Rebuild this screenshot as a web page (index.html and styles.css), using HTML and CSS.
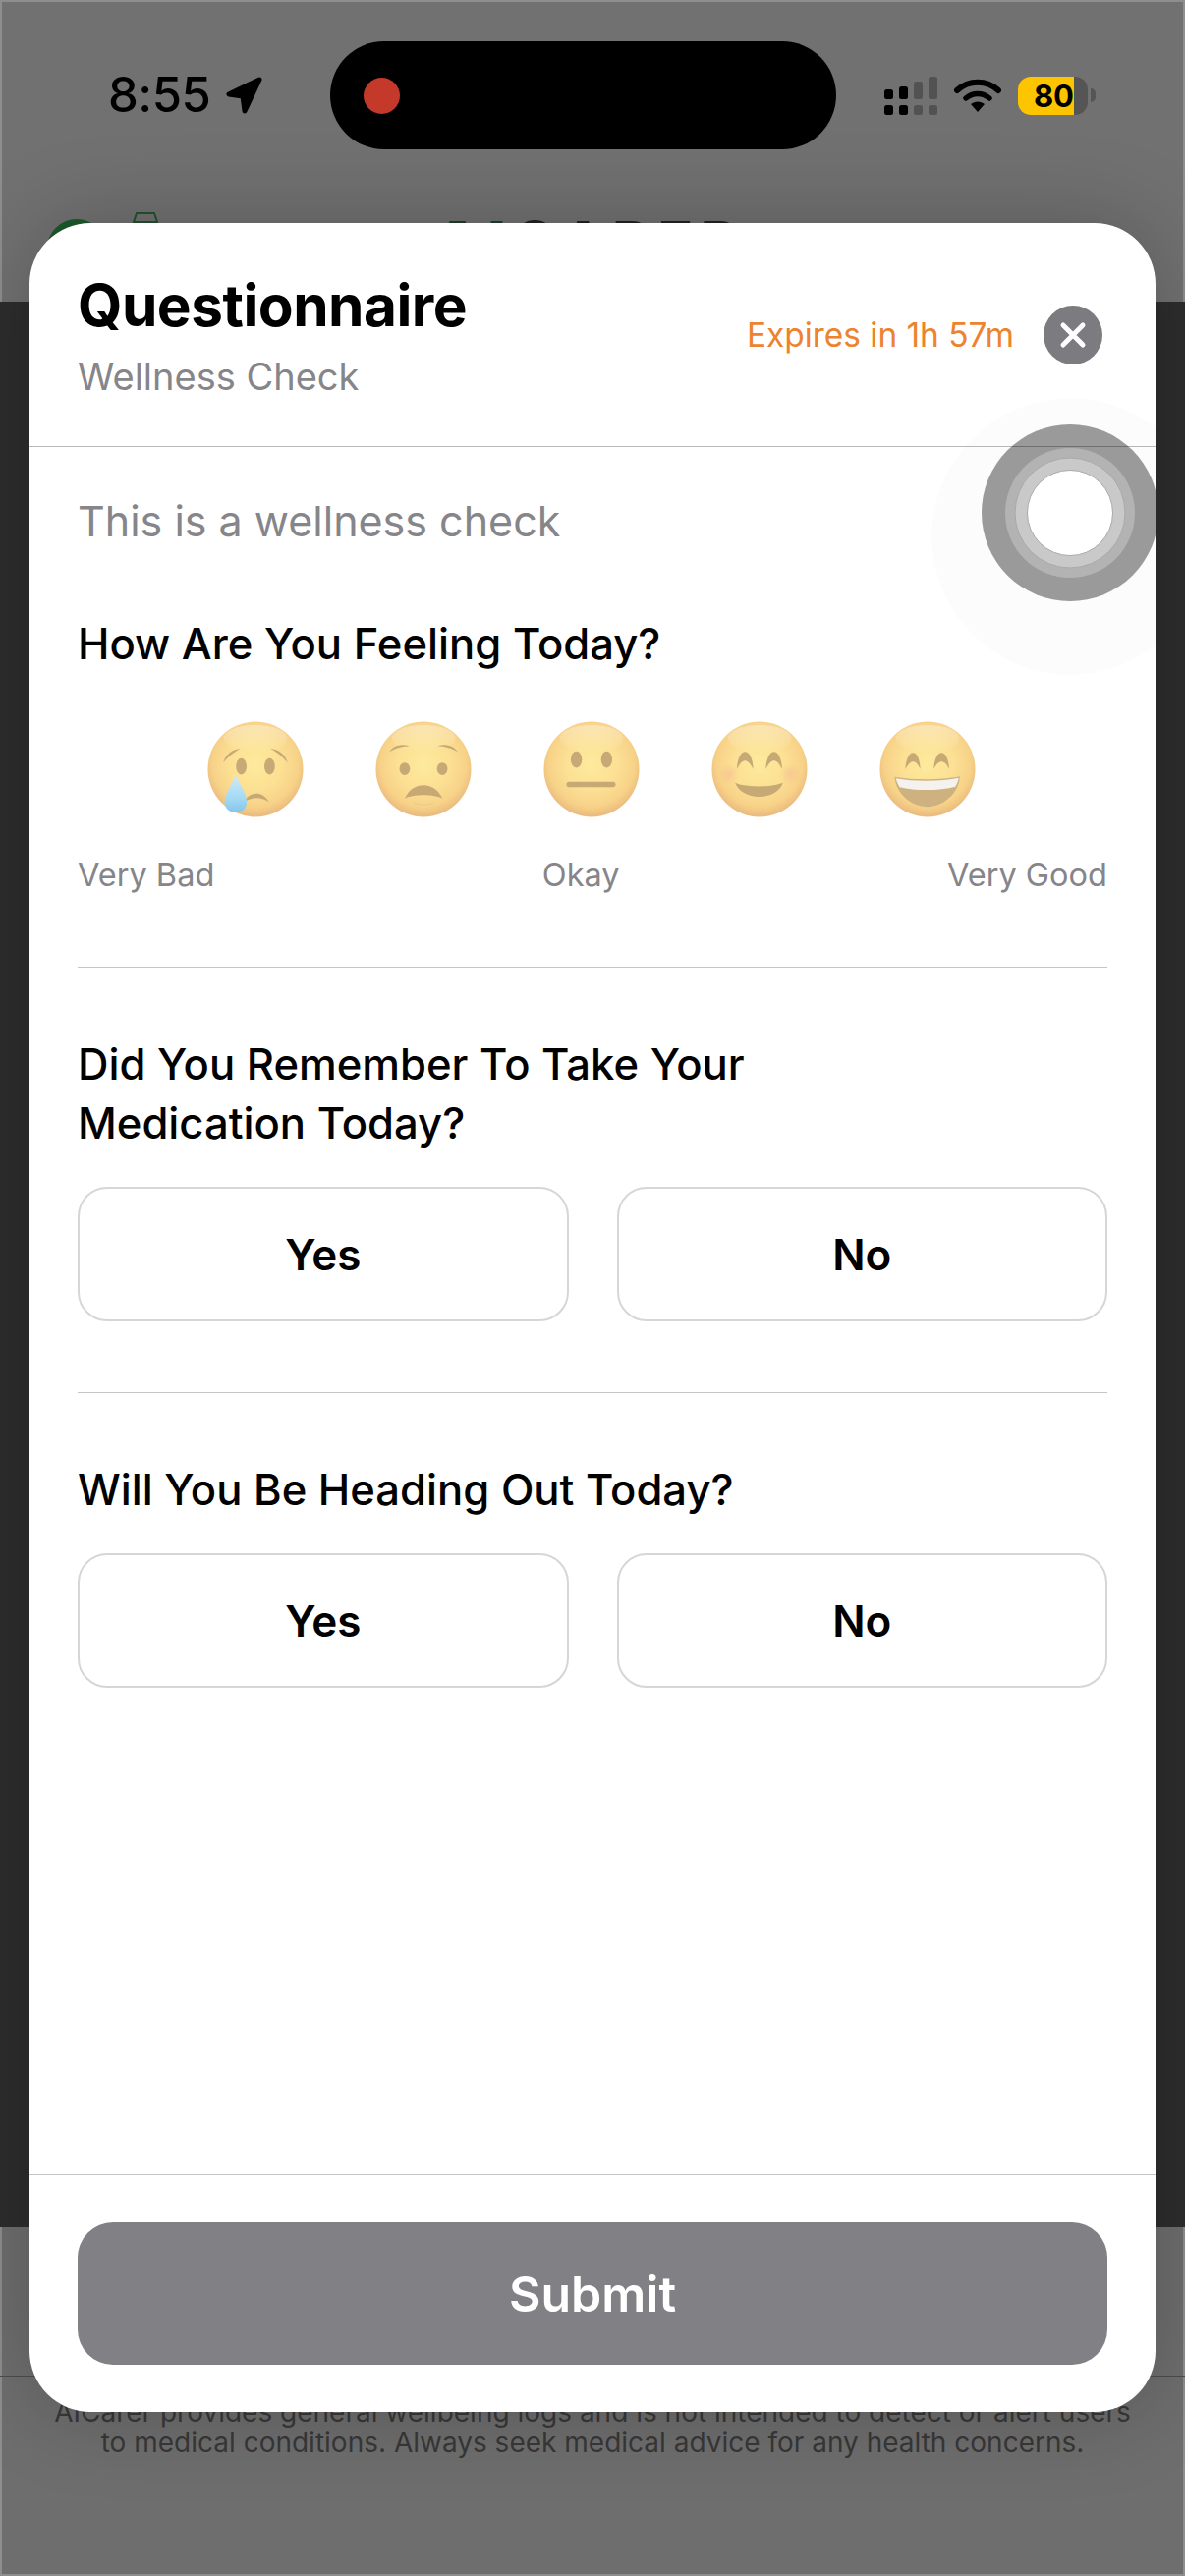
FILE: index.html
```html
<!DOCTYPE html>
<html lang="en">
<head>
    <meta charset="UTF-8">
    <meta name="viewport" content="width=device-width, initial-scale=1.0">
    <title>Questionnaire</title>
    <link rel="stylesheet" href="styles.css">
</head>
<body>
    <div class="page">
        <!--app behind the sheet, dimmed-->
        <div class="top-band">
            <div class="status-bar">
                <div class="status-left">
                    <span class="time">8:55</span>
                    <svg class="loc-arrow" viewBox="0 0 38 38"><path d="M35 3 4 18l14 2 2 15z" fill="#000" stroke="#000" stroke-width="5" stroke-linejoin="round"/></svg>
                </div>
                <div class="island"><span class="rec-dot"></span></div>
                <div class="status-right">
                    <svg class="signal" viewBox="0 0 54 39">
                        <rect x="0" y="13" width="9" height="10" rx="2.5" fill="#000"/>
                        <rect x="15" y="10" width="9" height="13" rx="2.5" fill="#000"/>
                        <rect x="30" y="5" width="9" height="18" rx="2.5" fill="#535252"/>
                        <rect x="45" y="0" width="9" height="23" rx="2.5" fill="#535252"/>
                        <rect x="0" y="29" width="9" height="10" rx="2.5" fill="#000"/>
                        <rect x="15" y="29" width="9" height="10" rx="2.5" fill="#000"/>
                        <rect x="30" y="29" width="9" height="10" rx="2.5" fill="#535252"/>
                        <rect x="45" y="29" width="9" height="10" rx="2.5" fill="#535252"/>
                    </svg>
                    <svg class="wifi" viewBox="0 0 48 36">
                        <path d="M3 13C15 2 33 2 45 13" fill="none" stroke="#000" stroke-width="6" stroke-linecap="round"/>
                        <path d="M12 21C19 15 29 15 36 21" fill="none" stroke="#000" stroke-width="5.5" stroke-linecap="round"/>
                        <path d="M17 27C21 23.5 27 23.5 31 27L24 35z" fill="#000"/>
                    </svg>
                    <div class="battery">
                        <div class="battery-body">
                            <span class="battery-level"></span>
                            <span class="battery-num">80</span>
                        </div>
                        <span class="battery-tip"></span>
                    </div>
                </div>
            </div>
            <div class="app-header">
                <span class="app-logo"></span>
                <svg class="app-bottle" viewBox="0 0 26 30"><path d="M4 1h18l3 9v18H1V10zM1 10h24" fill="none" stroke="#24522f" stroke-width="2"/></svg>
                <span class="app-title"><b>AI</b>CARER</span>
            </div>
        </div>
        <div class="dark-band"></div>
        <div class="bottom-band">
            <p class="disclaimer">AICarer provides general wellbeing logs and is not intended to detect or alert users<br>to medical conditions. Always seek medical advice for any health concerns.</p>
        </div>

        <!--questionnaire sheet-->
        <div class="sheet">
            <div class="sheet-head">
                <div>
                    <h1 class="sheet-title">Questionnaire</h1>
                    <div class="sheet-sub">Wellness Check</div>
                </div>
                <div class="head-right">
                    <span class="expires">Expires in 1h 57m</span>
                    <span class="close-btn">
                        <svg viewBox="0 0 60 60"><path d="M20 20 40 40M40 20 20 40" stroke="#fff" stroke-width="5" stroke-linecap="round"/></svg>
                    </span>
                </div>
            </div>

            <div class="sheet-body">
                <p class="intro">This is a wellness check</p>

                <div class="question q-first">How Are You Feeling Today?</div>
                <div class="emoji-row">
                    <svg class="emoji" viewBox="0 0 100 100">
                        <use href="#face"/>
                        <path d="M16.5 43C19 35 26 29 34.5 28.5 28 32 23 36 16.5 43zM83.5 43C81 35 74 29 65.5 28.5 72 32 77 36 83.5 43z" fill="#c6a974"/>
                        <ellipse cx="35.3" cy="47" rx="5.5" ry="8.5" fill="#c6a974"/>
                        <ellipse cx="64.7" cy="47" rx="5.5" ry="8.5" fill="#c6a974"/>
                        <path d="M38 84C42 75 56 70 64 84 55 78 47 79 38 84z" fill="#c6a974"/>
                        <path d="M29.5 56C33 65 41 75 41 84 41 91 35.5 95 29.5 95 23.5 95 18 91 18 84 18 75 26 65 29.5 56z" fill="url(#tear)"/>
                    </svg>
                    <svg class="emoji" viewBox="0 0 100 100">
                        <use href="#face"/>
                        <path d="M14.5 32C18 26 27 23 35.5 26 27 26 21 28 14.5 32zM85.5 32C82 26 73 23 64.5 26 73 26 79 28 85.5 32z" fill="#c6a974"/>
                        <ellipse cx="30.5" cy="49.5" rx="5.5" ry="6.5" fill="#c6a974"/>
                        <ellipse cx="69.5" cy="49.5" rx="5.5" ry="6.5" fill="#c6a974"/>
                        <path d="M30.5 80.5C35 70 43 66.5 50 66.5 57 66.5 65 70 69.8 80.5 62 75.5 38 75.5 30.5 80.5z" fill="#c6a974"/>
                        <path d="M40 85C46 87.5 54 87.5 60 85" fill="none" stroke="#eccd8a" stroke-width="1.5"/>
                    </svg>
                    <svg class="emoji" viewBox="0 0 100 100">
                        <use href="#face"/>
                        <ellipse cx="34.3" cy="40" rx="5.8" ry="8.5" fill="#c6a974"/>
                        <ellipse cx="65.7" cy="40" rx="5.8" ry="8.5" fill="#c6a974"/>
                        <rect x="24" y="63" width="51" height="5.5" rx="2.7" fill="#c6a974"/>
                    </svg>
                    <svg class="emoji" viewBox="0 0 100 100">
                        <use href="#face"/>
                        <circle cx="18" cy="55" r="11" fill="url(#blush)"/>
                        <circle cx="82" cy="55" r="11" fill="url(#blush)"/>
                        <path d="M26.5 50C27 38 31 32 35 32 39 32 43 38 43.5 50 40 43 37.5 41 35 41 32.5 41 30 43 26.5 50zM56.5 50C57 38 61 32 65 32 69 32 73 38 73.5 50 70 43 67.5 41 65 41 62.5 41 60 43 56.5 50z" fill="#c6a974"/>
                        <path d="M24.7 64C35 69 63 69 74.3 64 71 74 60 78.5 50 78.5 38 78.5 28 73 24.7 64z" fill="#c6a974"/>
                    </svg>
                    <svg class="emoji" viewBox="0 0 100 100">
                        <use href="#face"/>
                        <path d="M27 50C27.5 39 31 33 35 33 39 33 42 39 42.5 50 40 44 37.5 42 35 42 32.5 42 30 44 27 50zM56.5 50C57 39 60.5 33 64.5 33 68.5 33 72 39 72.5 50 70 44 67 42 64.5 42 62 42 59 44 56.5 50z" fill="#c6a974"/>
                        <path d="M15.8 58C35 61.5 65 61.5 83.5 57.5 83 75 66 89 50 89 33 89 17 75 15.8 58z" fill="#cdb17f"/>
                        <path d="M17 59.5C36 63 64 63 82.5 59 81.5 63 80.5 65.5 79 68 62 72.5 38 72.5 21 68.5 19 65.5 18 63 17 59.5z" fill="#f3f2ee"/>
                    </svg>
                </div>
                <div class="scale-labels">
                    <span>Very Bad</span>
                    <span>Okay</span>
                    <span>Very Good</span>
                </div>

                <div class="rule"></div>
                <div class="question">Did You Remember To Take Your<br>Medication Today?</div>
                <div class="answers">
                    <div class="answer">Yes</div>
                    <div class="answer">No</div>
                </div>

                <div class="rule rule-last"></div>
                <div class="question">Will You Be Heading Out Today?</div>
                <div class="answers">
                    <div class="answer">Yes</div>
                    <div class="answer">No</div>
                </div>
            </div>

            <div class="sheet-foot">
                <div class="submit">Submit</div>
            </div>

            <!--assistive touch sits on top of the sheet-->
            <span class="touch-halo"></span>
            <span class="touch touch-1"></span>
            <span class="touch touch-2"></span>
            <span class="touch touch-3"></span>
            <span class="touch touch-4"></span>
        </div>
    </div>

    <!--shared emoji parts-->
    <svg class="defs" width="0" height="0">
        <defs>
            <radialGradient id="faceFill" cx="50%" cy="44%" r="55%">
                <stop offset="0" stop-color="#fdea9d"/>
                <stop offset="0.5" stop-color="#fce093"/>
                <stop offset="0.82" stop-color="#f7d288"/>
                <stop offset="1" stop-color="#ebbb7f"/>
            </radialGradient>
            <linearGradient id="shine" x1="0" y1="0" x2="0" y2="1">
                <stop offset="0" stop-color="#fff" stop-opacity="0.35"/>
                <stop offset="1" stop-color="#fff" stop-opacity="0"/>
            </linearGradient>
            <linearGradient id="tear" x1="0" y1="0" x2="0" y2="1">
                <stop offset="0" stop-color="#cfeaf7"/>
                <stop offset="0.6" stop-color="#a5daf3"/>
                <stop offset="1" stop-color="#82c6ea"/>
            </linearGradient>
            <radialGradient id="blush">
                <stop offset="0" stop-color="#f8c493" stop-opacity="0.8"/>
                <stop offset="1" stop-color="#f8c493" stop-opacity="0"/>
            </radialGradient>
            <g id="face">
                <circle cx="50" cy="50" r="49.5" fill="url(#faceFill)"/>
                <ellipse cx="50" cy="18" rx="33" ry="14" fill="url(#shine)"/>
            </g>
        </defs>
    </svg>
</body>
</html>
```

FILE: styles.css
```css
*{
    margin:0;
    padding:0;
    box-sizing:border-box;
}
html,body{
    width:1206px;
    height:2622px;
    overflow:hidden;
}
body{
    font-family:Inter,"Liberation Sans",sans-serif;
    background:#6f6e6e;
}
.page{
    position:relative;
    width:1206px;
    height:2622px;
    display:flex;
    flex-direction:column;
}
.defs{
    position:absolute;
}

/*dimmed app behind*/
.top-band{
    height:307px;
    background:#727171;
    overflow:hidden;
    /*thin light edge of the photographed screen*/
    box-shadow:inset 2px 2px 0 #8f8e8e,inset -2px 0 0 #8f8e8e;
}
.status-bar{
    display:flex;
    align-items:center;
    padding:42px 0 0 110px;
}
.status-left{
    display:flex;
    align-items:center;
    width:226px;
    gap:15px;
}
.time{
    font-size:49px;
    font-weight:500;
    line-height:60px;
    color:#000;
    letter-spacing:-0.5px;
}
.loc-arrow{
    width:38px;
    height:38px;
}
.island{
    width:515px;
    height:110px;
    border-radius:55px;
    background:#000;
    display:flex;
    align-items:center;
    padding-left:34px;
}
.rec-dot{
    width:37px;
    height:37px;
    border-radius:50%;
    background:#c5392a;
}
.status-right{
    display:flex;
    align-items:center;
    margin-left:49px;
    gap:17px;
}
.signal{
    width:54px;
    height:39px;
}
.wifi{
    width:48px;
    height:36px;
}
.battery{
    display:flex;
    align-items:center;
    gap:3px;
}
.battery-body{
    position:relative;
    width:71px;
    height:39px;
    border-radius:13px;
    background:#565555;
    overflow:hidden;
    display:flex;
    align-items:center;
    justify-content:flex-end;
    padding-right:14px;
}
.battery-level{
    position:absolute;
    left:0;
    top:0;
    bottom:0;
    width:57px;
    background:#fdc500;
}
.battery-num{
    position:relative;
    font-size:31px;
    font-weight:700;
    color:#000;
}
.battery-tip{
    width:5px;
    height:14px;
    border-radius:0 5px 5px 0;
    background:#565555;
}
.app-header{
    display:flex;
    align-items:flex-start;
    padding:0 0 0 48px;
    margin-top:64px;
}
.app-logo{
    width:60px;
    height:60px;
    margin-top:7px;
    border-radius:50%;
    background:#1c5a2b;
}
.app-bottle{
    width:26px;
    height:30px;
    margin-left:27px;
}
.app-title{
    margin:1px 0 0 281px;
    font-size:60px;
    line-height:60px;
    font-weight:700;
    letter-spacing:7px;
    color:#222;
}
.app-title b{
    color:#1f3f2a;
}
.dark-band{
    height:1960px;
    background:#2e2d2d;
}
.bottom-band{
    flex:1;
    padding-top:151px;
    background:#6f6e6e;
    box-shadow:inset 2px -2px 0 #8f8e8e,inset -2px 0 0 #8f8e8e;
}
.disclaimer{
    border-top:1px solid #4d4c4c;
    padding-top:21px;
    font-size:28px;
    line-height:31px;
    text-align:center;
    color:#383838;
}

/*sheet*/
.sheet{
    position:absolute;
    z-index:2;
    left:30px;
    top:227px;
    width:1146px;
    height:2228px;
    border-radius:62px;
    background:#fff;
    display:flex;
    flex-direction:column;
    overflow:hidden;
    box-shadow:0 0 90px rgba(0,0,0,0.22);
}
.sheet-head{
    display:flex;
    align-items:center;
    justify-content:space-between;
    height:228px;
    padding:49px;
    border-bottom:1px solid #b9b9b9;
}
.sheet-title{
    font-size:58.5px;
    line-height:70px;
    font-weight:700;
    color:#000;
    letter-spacing:-0.5px;
}
.sheet-sub{
    margin-top:15px;
    font-size:38px;
    line-height:44px;
    color:#85858a;
}
.head-right{
    display:flex;
    align-items:center;
    gap:30px;
    margin-right:5px;
}
.expires{
    font-size:33.4px;
    color:#ed832e;
}
.close-btn{
    width:60px;
    height:60px;
    border-radius:50%;
    background:#7b7b80;
}
.close-btn svg{
    display:block;
    width:60px;
    height:60px;
}
.sheet-body{
    flex:1;
    padding:0 49px;
}
.intro{
    margin-top:50px;
    font-size:43px;
    line-height:50px;
    color:#85858a;
}
.question{
    margin-top:69px;
    font-size:43.6px;
    line-height:60px;
    font-weight:500;
    color:#000;
}
.q-first{
    margin-top:71px;
}
.emoji-row{
    display:flex;
    justify-content:center;
    gap:73px;
    margin:48px 3px 0 0;
}
.emoji{
    width:98px;
    height:98px;
}
.scale-labels{
    display:flex;
    justify-content:space-between;
    margin-top:39px;
    font-size:32.5px;
    line-height:40px;
    color:#85858a;
}
.rule{
    height:1px;
    margin-top:73px;
    background:#c4c4c4;
}
.rule-last{
    margin-top:72px;
}
.answers{
    display:flex;
    gap:49px;
    margin-top:34px;
}
.answer{
    flex:1;
    height:137px;
    border:2px solid #d6d6d8;
    border-radius:30px;
    display:flex;
    align-items:center;
    justify-content:center;
    font-size:44px;
    font-weight:600;
    color:#000;
}
.sheet-foot{
    padding:48px 49px;
    border-top:1px solid #c4c4c4;
}
.submit{
    height:145px;
    border-radius:36px;
    background:#808085;
    display:flex;
    align-items:center;
    justify-content:center;
    font-size:50px;
    font-weight:600;
    color:#fff;
}

/*assistive touch, coordinates relative to the sheet*/
.touch-halo,.touch{
    position:absolute;
    border-radius:50%;
    transform:translate(-50%,-50%);
}
.touch-halo{
    left:1059px;
    top:319px;
    width:282px;
    height:282px;
    background:rgba(0,0,0,0.012);
}
.touch{
    left:1059px;
    top:295px;
}
.touch-1{
    width:180px;
    height:180px;
    background:rgba(0,0,0,0.39);
}
.touch-2{
    width:132px;
    height:132px;
    background:#b3b3b3;
}
.touch-3{
    width:113px;
    height:113px;
    background:#c9c9c9;
    border:1px solid #a9a9a9;
}
.touch-4{
    width:88px;
    height:88px;
    background:#fff;
    border:1px solid #a9a9a9;
}
```
